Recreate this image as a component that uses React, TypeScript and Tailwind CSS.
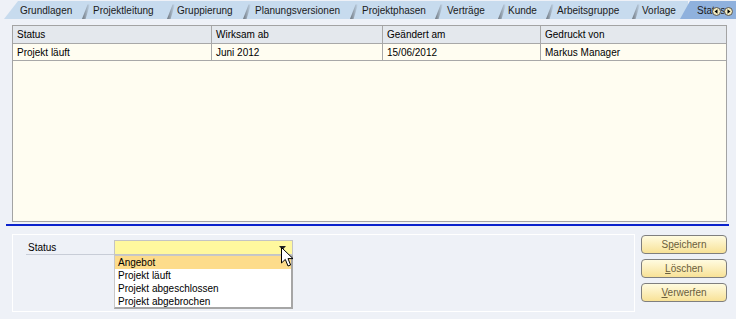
import React from "react";

type Tab = { label: string; cls: string; first?: boolean };

const tabs: Tab[] = [
  { label: "Grundlagen", cls: "w-[78px] pl-[16px]", first: true },
  { label: "Projektleitung", cls: "w-[85px] pl-[11px]" },
  { label: "Gruppierung", cls: "w-[76px] pl-[10px]" },
  { label: "Planungsversionen", cls: "w-[107px] pl-[12px]" },
  { label: "Projektphasen", cls: "w-[85px] pl-[12px]" },
  { label: "Verträge", cls: "w-[63px] pl-[12px]" },
  { label: "Kunde", cls: "w-[48px] pl-[10px]" },
  { label: "Arbeitsgruppe", cls: "w-[86px] pl-[11px]" },
  { label: "Vorlage", cls: "w-[56px] pl-[10px]" },
];

const columns = ["Status", "Wirksam ab", "Geändert am", "Gedruckt von"];
const row = ["Projekt läuft", "Juni 2012", "15/06/2012", "Markus Manager"];
const options = ["Angebot", "Projekt läuft", "Projekt abgeschlossen", "Projekt abgebrochen"];

const ScrollArrow = ({ dir }: { dir: "left" | "right" }) => (
  <svg width="9" height="9" viewBox="0 0 9 9">
    <circle cx="4.5" cy="4.5" r="4" fill="#f3ecc0" stroke="#555" strokeWidth="1" />
    {dir === "left" ? (
      <path d="M2.5 4.5 L5.5 2.3 L5.5 6.7 Z" fill="#000" />
    ) : (
      <path d="M6.5 4.5 L3.5 2.3 L3.5 6.7 Z" fill="#000" />
    )}
  </svg>
);

const Button = ({ pre, u, post }: { pre: string; u: string; post: string }) => (
  <button className="h-[19px] w-[86px] rounded-[4px] border border-[#7f7f7f] bg-gradient-to-b from-[#fffbe0] to-[#f8e296] text-[10px] text-[#6b5e3c]">
    {pre}
    <span className="underline underline-offset-1">{u}</span>
    {post}
  </button>
);

export default function App() {
  return (
    <div className="relative h-[319px] w-[736px] overflow-hidden bg-[#eef1f7] text-[10px] text-black [font-family:'Liberation_Sans',Arial,sans-serif]">
      {/* tabs */}
      <div className="relative flex h-[19px] pl-[4px] pt-[1px]">
        {tabs.map((t) => (
          <div
            key={t.label}
            className={`relative flex h-[18px] shrink-0 items-center bg-[#c7dbee] text-[#1a1a1a] ${t.cls} ${
              t.first ? "[clip-path:polygon(14px_0,100%_0,100%_100%,0_100%)]" : ""
            }`}
          >
            {!t.first && (
              <span className="absolute left-0 top-0 h-full w-[8px] bg-gradient-to-r from-[#6f7780] to-[#c7dbee] [clip-path:polygon(0_100%,70%_20%,100%_20%,45%_100%)]" />
            )}
            <span className="relative">{t.label}</span>
          </div>
        ))}
        <div className="relative -ml-[8px] flex h-[18px] flex-1 items-center overflow-hidden bg-[#8fb1dd] pl-[17px] text-[#1a1a1a] [clip-path:polygon(10px_0,100%_0,100%_100%,0_100%)]">
          Status
        </div>
        <div className="absolute right-[3px] top-[7px] flex gap-[3px]">
          <ScrollArrow dir="left" />
          <ScrollArrow dir="right" />
        </div>
      </div>

      {/* table */}
      <div className="ml-[12px] mt-[6px] h-[197px] w-[715px] border border-[#a3a3a3] bg-[#fffdf1]">
        <div className="grid h-[18px] grid-cols-[199px_171px_158px_1fr] border-b border-[#a8a8a8] bg-[#e4e8ed]">
          {columns.map((c, i) => (
            <div key={c} className={`flex items-center pl-[4px] ${i < 3 ? "border-r border-[#a8a8a8]" : ""}`}>
              {c}
            </div>
          ))}
        </div>
        <div className="grid h-[17px] grid-cols-[199px_171px_158px_1fr] border-b border-[#a8a8a8]">
          {row.map((c, i) => (
            <div key={c} className={`flex items-center pl-[4px] ${i < 3 ? "border-r border-[#a8a8a8]" : ""}`}>
              {c}
            </div>
          ))}
        </div>
      </div>

      {/* separator */}
      <div className="ml-[6px] mt-[2px] h-[2px] w-[723px] bg-[#0a22cc]" />

      {/* bottom */}
      <div className="ml-[12px] mt-[8px] flex">
        <div className="flex h-[78px] w-[623px] border border-white pl-[13px] pt-[5px]">
          <div className="flex h-[15px] w-[88px] items-center border-b border-[#c8cdd7] pl-[2px]">Status</div>
          <div className="relative h-[15px] w-[179px] border border-[#c4c4c4] bg-[#fff89e]">
            <svg className="absolute left-[164px] top-[5px]" width="7" height="4" viewBox="0 0 7 4">
              <path d="M0 0 H7 L3.5 4 Z" fill="#222" />
            </svg>
            <div className="absolute left-[-1px] top-[14px] z-10 h-[54px] w-[179px] border border-b-2 border-r-2 border-[#a6a6a6] border-l-[#c8c8c8] border-t-[#c8c8c8] bg-white">
              {options.map((o, i) => (
                <div key={o} className={`flex h-[13px] items-center pl-[3px] ${i === 0 ? "bg-[#fddc8b]" : ""}`}>
                  {o}
                </div>
              ))}
            </div>
            <svg className="absolute left-[166px] top-[6px] z-20" width="13" height="21" viewBox="0 0 13 21">
              <path d="M0.5 0.5 L0.5 16 L4.3 12.4 L7 19 L9.6 18 L7 11.6 L12 11.6 Z" fill="#fff" stroke="#000" strokeWidth="1" strokeLinejoin="round" />
            </svg>
          </div>
        </div>
        <div className="ml-[6px] mt-[1px] flex flex-col gap-[5px]">
          <Button pre="S" u="p" post="eichern" />
          <Button pre="" u="L" post="öschen" />
          <Button pre="" u="V" post="erwerfen" />
        </div>
      </div>
    </div>
  );
}
